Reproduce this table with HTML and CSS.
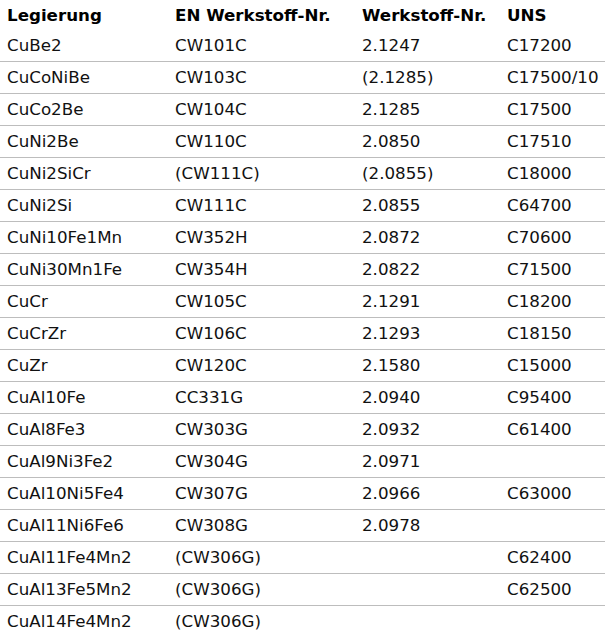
FILE: index.html
```html
<!DOCTYPE html>
<html lang="de">
<head>
<meta charset="utf-8">
<title>Legierungen</title>
<link rel="stylesheet" href="styles.css">
</head>
<body>
<div class="table">
  <div class="row head"><div>Legierung</div><div>EN Werkstoff-Nr.</div><div>Werkstoff-Nr.</div><div>UNS</div></div>
  <div class="row"><div>CuBe2</div><div>CW101C</div><div>2.1247</div><div>C17200</div></div>
  <div class="row"><div>CuCoNiBe</div><div>CW103C</div><div>(2.1285)</div><div>C17500/10</div></div>
  <div class="row"><div>CuCo2Be</div><div>CW104C</div><div>2.1285</div><div>C17500</div></div>
  <div class="row"><div>CuNi2Be</div><div>CW110C</div><div>2.0850</div><div>C17510</div></div>
  <div class="row"><div>CuNi2SiCr</div><div>(CW111C)</div><div>(2.0855)</div><div>C18000</div></div>
  <div class="row"><div>CuNi2Si</div><div>CW111C</div><div>2.0855</div><div>C64700</div></div>
  <div class="row"><div>CuNi10Fe1Mn</div><div>CW352H</div><div>2.0872</div><div>C70600</div></div>
  <div class="row"><div>CuNi30Mn1Fe</div><div>CW354H</div><div>2.0822</div><div>C71500</div></div>
  <div class="row"><div>CuCr</div><div>CW105C</div><div>2.1291</div><div>C18200</div></div>
  <div class="row"><div>CuCrZr</div><div>CW106C</div><div>2.1293</div><div>C18150</div></div>
  <div class="row"><div>CuZr</div><div>CW120C</div><div>2.1580</div><div>C15000</div></div>
  <div class="row"><div>CuAl10Fe</div><div>CC331G</div><div>2.0940</div><div>C95400</div></div>
  <div class="row"><div>CuAl8Fe3</div><div>CW303G</div><div>2.0932</div><div>C61400</div></div>
  <div class="row"><div>CuAl9Ni3Fe2</div><div>CW304G</div><div>2.0971</div><div></div></div>
  <div class="row"><div>CuAl10Ni5Fe4</div><div>CW307G</div><div>2.0966</div><div>C63000</div></div>
  <div class="row"><div>CuAl11Ni6Fe6</div><div>CW308G</div><div>2.0978</div><div></div></div>
  <div class="row"><div>CuAl11Fe4Mn2</div><div>(CW306G)</div><div></div><div>C62400</div></div>
  <div class="row"><div>CuAl13Fe5Mn2</div><div>(CW306G)</div><div></div><div>C62500</div></div>
  <div class="row"><div>CuAl14Fe4Mn2</div><div>(CW306G)</div><div></div><div></div></div>
</div>
</body>
</html>
```
FILE: styles.css
```css
html, body {
  margin: 0;
  padding: 0;
  background: #ffffff;
}
.table {
  font-family: "DejaVu Sans", Verdana, sans-serif;
  font-size: 16.7px;
  color: #111111;
}
.row {
  display: grid;
  grid-template-columns: 168px 187px 145px 1fr;
  height: 31px;
  line-height: 31px;
  border-bottom: 1px solid #bdbdbd;
  white-space: nowrap;
}
.row > div {
  padding-left: 7px;
}
.row.head {
  height: 30px;
  line-height: 30px;
  border-bottom: none;
  font-weight: bold;
  color: #000000;
}
```
